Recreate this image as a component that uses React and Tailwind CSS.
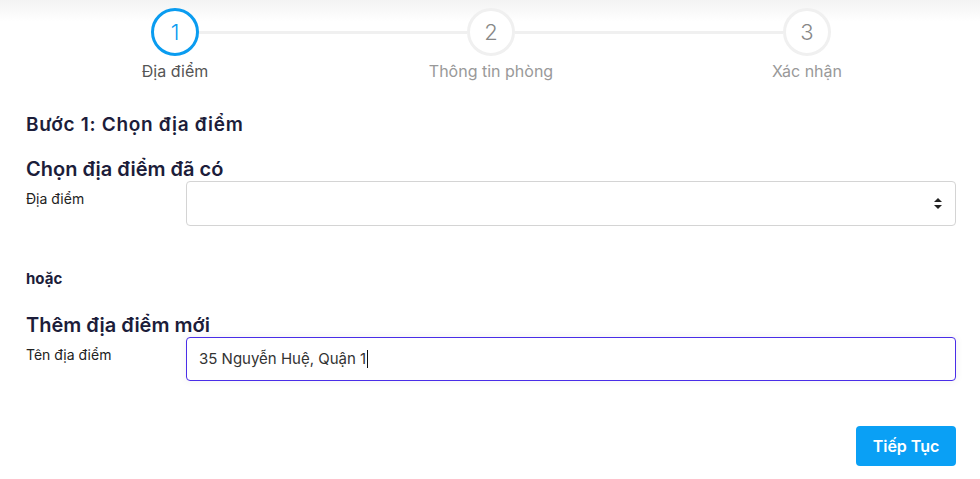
import React from 'react';

const steps = ['Địa điểm', 'Thông tin phòng', 'Xác nhận'];

function Step({ index, label, active }) {
  const first = index === 0;
  const last = index === steps.length - 1;
  return (
    <div className="flex flex-col items-center">
      <div className="flex w-full items-center">
        <div className={`h-[3px] flex-1 ${first ? '' : 'bg-[#f0f0f0]'}`} />
        <div
          className={`flex h-12 w-12 items-center justify-center rounded-full border-[3px] bg-white text-[22px] font-light ${
            active ? 'border-[#0a9cf0] text-[#0a9cf0]' : 'border-[#f0f0f0] text-[#888]'
          }`}
        >
          {index + 1}
        </div>
        <div className={`h-[3px] flex-1 ${last ? '' : 'bg-[#f0f0f0]'}`} />
      </div>
      <div
        className={`mt-[5px] text-[16px] leading-5 ${active ? 'text-[#555]' : 'text-[#999]'}`}
      >
        {label}
      </div>
    </div>
  );
}

export default function App() {
  return (
    <div className="min-h-[479px] bg-white font-['Inter','Noto_Sans',sans-serif]">
      {/* stepper */}
      <div className="grid grid-cols-3 bg-[linear-gradient(to_bottom,#f3f3f3,#ffffff_22px)] pl-[17px] pr-[15px] pt-2">
        {steps.map((s, i) => (
          <Step key={s} index={i} label={s} active={i === 0} />
        ))}
      </div>

      <div className="pl-[26px] pr-[24px]">
        <h3 className="mt-[32px] text-[19px] font-semibold leading-6 tracking-[0.7px] text-[#1c1d3a]">
          Bước 1: Chọn địa điểm
        </h3>

        <h2 className="mt-5 text-[20px] font-semibold leading-6 text-[#1c1d3a]">
          Chọn địa điểm đã có
        </h2>
        <div className="flex">
          <label className="w-40 shrink-0 pt-2 text-[14px] leading-5 text-[#222]">Địa điểm</label>
          <div className="flex h-[45px] flex-1 items-center justify-end rounded border border-[#d4d4d4] bg-white pr-[13px]">
            <svg width="8" height="11" viewBox="0 0 8 11">
              <path d="M4 0 L8 4 L0 4 Z" fill="#222" />
              <path d="M0 7 L8 7 L4 11 Z" fill="#222" />
            </svg>
          </div>
        </div>

        <div className="mt-[43px] text-[15px] font-bold leading-5 text-[#1c1d3a]">hoặc</div>

        <h2 className="mt-6 text-[20px] font-semibold leading-6 text-[#1c1d3a]">
          Thêm địa điểm mới
        </h2>
        <div className="flex">
          <label className="w-40 shrink-0 pt-2 text-[14px] leading-5 text-[#222]">Tên địa điểm</label>
          <div className="flex h-11 flex-1 items-center rounded border border-[#4a2ee8] bg-white pl-3 text-[15px] text-[#333] shadow-[0_0_6px_2px_rgba(0,0,0,0.04)]">
            <span>35 Nguyễn Huệ, Quận 1</span>
            <span className="ml-px inline-block h-[18px] w-px bg-[#111]" />
          </div>
        </div>

        <div className="mt-[45px] flex justify-end">
          <button className="h-10 w-[100px] rounded bg-[#0aa0f5] text-[16px] font-semibold text-white">
            Tiếp Tục
          </button>
        </div>
      </div>
    </div>
  );
}
